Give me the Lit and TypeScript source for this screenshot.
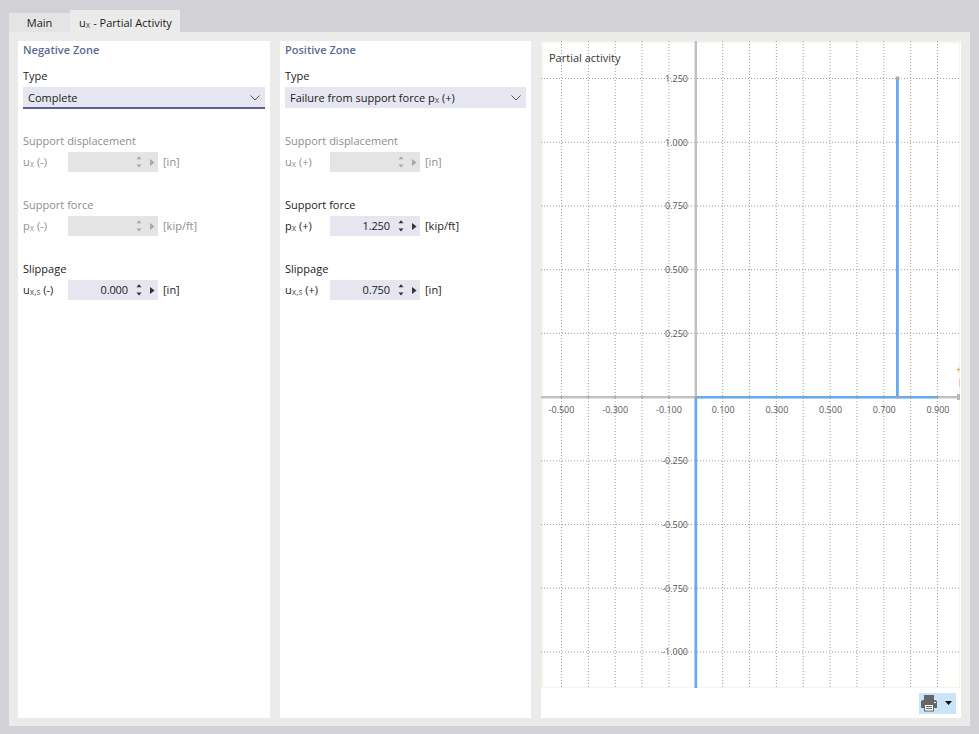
import { LitElement, html, css, svg } from "lit";
import { customElement } from "lit/decorators.js";

const xs = Array.from({ length: 15 }, (_, i) => 561.5 + i * 26.857);
const ys = Array.from({ length: 10 }, (_, i) => 37.5 + i * 63.72);
const yLabels = ["1.250", "1.000", "0.750", "0.500", "0.250", "", "-0.250", "-0.500", "-0.750", "-1.000"];
const xLabels = ["-0.500", "-0.300", "-0.100", "0.100", "0.300", "0.500", "0.700", "0.900"];

@customElement("num-field")
class NumField extends LitElement {
  static properties = {
    label: {}, sym: {}, sub: {}, sign: {}, value: {}, unit: {}, disabled: { type: Boolean },
  };
  declare label: string; declare sym: string; declare sub: string; declare sign: string;
  declare value: string; declare unit: string; declare disabled: boolean;
  static styles = css`
    :host { display: block; margin-top: 25px; color: #1b1b1b; }
    :host([disabled]) { color: #8e8e8e; }
    .label { height: 16px; line-height: 16px; }
    .row { display: flex; align-items: center; height: 20px; margin-top: 3px; }
    .sym { width: 45px; flex: none; white-space: nowrap; }
    sub { font-size: 8.5px; line-height: 0; vertical-align: -1px; color: #555; }
    :host([disabled]) sub { color: #9a9a9a; }
    .input { width: 90px; height: 20px; flex: none; display: flex; align-items: center; background: #e6e6f0; box-sizing: border-box; }
    :host([disabled]) .input { background: #e4e4e4; }
    .value { flex: 1; text-align: right; padding-right: 4px; letter-spacing: -0.1px; }
    .input svg { flex: none; display: block; fill: #333; }
    :host([disabled]) .input svg { fill: #a8a8a8; }
    .unit { margin-left: 5px; white-space: nowrap; }
  `;
  render() {
    return html`
      <div class="label">${this.label}</div>
      <div class="row">
        <span class="sym">${this.sym}<sub>${this.sub}</sub> ${this.sign}</span>
        <div class="input">
          <span class="value">${this.value}</span>
          <svg width="26" height="20" viewBox="0 0 26 20">
            <path d="M4.5 7.3 L7 4.3 L9.5 7.3Z M4.5 12.4 L7 15.6 L9.5 12.4Z"/>
            <path d="M18 7 L22.6 10.5 L18 14Z"/>
          </svg>
        </div>
        <span class="unit">${this.unit}</span>
      </div>
    `;
  }
}

@customElement("app-root")
class AppRoot extends LitElement {
  static styles = css`
    :host { display: block; width: 979px; height: 734px; background: #d2d2d6; overflow: hidden;
      font: 11px/16px "Open Sans", "Noto Sans", sans-serif; color: #1b1b1b; }
    .tabs { display: flex; align-items: flex-end; height: 22px; padding: 10px 0 0 9px; }
    .tab { display: flex; align-items: center; justify-content: center; box-sizing: border-box; }
    .t1 { width: 61px; height: 19px; background: #e4e4e4; }
    .t2 { width: 110px; height: 22px; background: #ebebeb; padding: 3px 0 0 1px; }
    sub { font-size: 8.5px; line-height: 0; vertical-align: -1px; color: #555; }
    .content { display: flex; gap: 10px; width: 961px; height: 694px; box-sizing: border-box; margin-left: 9px; padding: 9px; background: #ebebeb; }
    .panel { background: #fff; box-sizing: border-box; padding: 0 5px; flex: none; height: 677px; }
    .p1 { width: 252px; }
    .p2 { width: 251px; }
    .title { height: 18px; line-height: 18px; font-weight: 600; color: #5c6a91; }
    .type { margin-top: 9px; height: 16px; line-height: 16px; }
    .combo { display: flex; align-items: center; justify-content: space-between; height: 21px; margin-top: 3px; padding: 0 5px 0 5px; background: #e6e6f0; }
    .combo svg { display: block; }
    .focus { box-shadow: inset 0 -1px #5e5e9e, 0 1px #5e5e9e; }
    .p3 { width: 420px; padding: 0; display: flex; flex-direction: column; }
    .chart { height: 647px; width: 419px; box-sizing: border-box; border: solid #f6f4e6; border-width: 2px 1px 1px 2px; flex: none; }
    .chart svg { display: block; margin: -2px 0 0 -2px; }
    .chart text { font: 9px "Open Sans", "Noto Sans", sans-serif; fill: #555; }
    .chart text.cap { font-size: 11px; fill: #333; }
    .chart text.a { fill: #d08a3c; }
    .chart text.b { fill: #54679a; }
    .foot { flex: 1; display: flex; justify-content: flex-end; align-items: flex-start; padding: 5px 5px 0 0; }
    .print { width: 37px; height: 21px; background: #cce4f7; display: block; }
  `;

  chart() {
    return html`<svg width="419" height="647" viewBox="0 0 419 647">
      ${xs.map((x) => svg`<line x1=${x - 541} x2=${x - 541} y1="0" y2="647" stroke="#a0a0a0" stroke-dasharray="1 2"/>`)}
      ${ys.map((y) => svg`<line x1="0" x2="419" y1=${y} y2=${y} stroke="#a0a0a0" stroke-dasharray="1 2"/>`)}
      <rect x="0" y="355" width="418" height="2.4" fill="#c0c0c0"/>
      <rect x="153.6" y="0" width="2.4" height="647" fill="#c0c0c0"/>
      <rect x="416" y="353" width="3" height="6" fill="#b8b8b8"/>
      <rect x="155" y="355" width="242" height="2.4" fill="#64aaf5"/>
      <rect x="153.6" y="356" width="2.6" height="291" fill="#64aaf5"/>
      <rect x="355" y="37" width="2.8" height="319" fill="#64aaf5"/>
      <rect x="354.8" y="35.5" width="3.5" height="3.5" fill="#a8a8a8"/>
      <rect x="355" y="355" width="2.8" height="2.4" fill="#a8a8a8"/>
      <rect x="153.6" y="355" width="2.4" height="2.4" fill="#a8a8a8"/>
      ${xs.map((x) => svg`<rect x=${x - 541 - 1} y="355" width="2" height="2.4" fill="#a0a0a0" fill-opacity=".55"/>`)}
      <text class="cap" x="8" y="21">Partial activity</text>
      ${yLabels.map((t, i) => svg`<text x="147" y=${ys[i] + 3.5} text-anchor="end">${t}</text>`)}
      ${xLabels.map((t, i) => svg`<text x=${xs[i * 2] - 541 + (i < 3 ? 0 : 0.5)} y="372" text-anchor="middle">${t}</text>`)}
      <text class="a" x="415" y="332">+</text>
      <text class="b" x="418" y="345">[</text>
    </svg>`;
  }

  render() {
    return html`
      <div class="tabs">
        <div class="tab t1">Main</div>
        <div class="tab t2"><span>u<sub>x</sub> - Partial Activity</span></div>
      </div>
      <div class="content">
        <section class="panel p1">
          <div class="title">Negative Zone</div>
          <div class="type">Type</div>
          <div class="combo focus"><span>Complete</span>${this.chev()}</div>
          <num-field disabled label="Support displacement" sym="u" sub="x" sign="(-)" unit="[in]"></num-field>
          <num-field disabled label="Support force" sym="p" sub="x" sign="(-)" unit="[kip/ft]"></num-field>
          <num-field label="Slippage" sym="u" sub="x,s" sign="(-)" value="0.000" unit="[in]"></num-field>
        </section>
        <section class="panel p2">
          <div class="title">Positive Zone</div>
          <div class="type">Type</div>
          <div class="combo"><span>Failure from support force p<sub>x</sub> (+)</span>${this.chev()}</div>
          <num-field disabled label="Support displacement" sym="u" sub="x" sign="(+)" unit="[in]"></num-field>
          <num-field label="Support force" sym="p" sub="x" sign="(+)" value="1.250" unit="[kip/ft]"></num-field>
          <num-field label="Slippage" sym="u" sub="x,s" sign="(+)" value="0.750" unit="[in]"></num-field>
        </section>
        <section class="panel p3">
          <div class="chart">${this.chart()}</div>
          <div class="foot">
            <svg class="print" viewBox="0 0 37 21">
              <rect x="5" y="2" width="10" height="5" fill="#666"/>
              <path d="M2 9 a2 2 0 0 1 2 -2 H16 a2 2 0 0 1 2 2 V15 H2Z" fill="#666"/>
              <rect x="5.5" y="11.5" width="9" height="6.5" fill="#fff" stroke="#666"/>
              <path d="M7 13.5 H13 M7 15.5 H13" stroke="#666"/>
              <rect x="15" y="9" width="2" height="1" fill="#fff"/>
              <path d="M26 8 H33 L29.5 12Z" fill="#111"/>
            </svg>
          </div>
        </section>
      </div>
    `;
  }

  chev() {
    return html`<svg width="10" height="6" viewBox="0 0 10 6"><path d="M0.5 0.5 L5 5 L9.5 0.5" fill="none" stroke="#555" stroke-width="1"/></svg>`;
  }
}
